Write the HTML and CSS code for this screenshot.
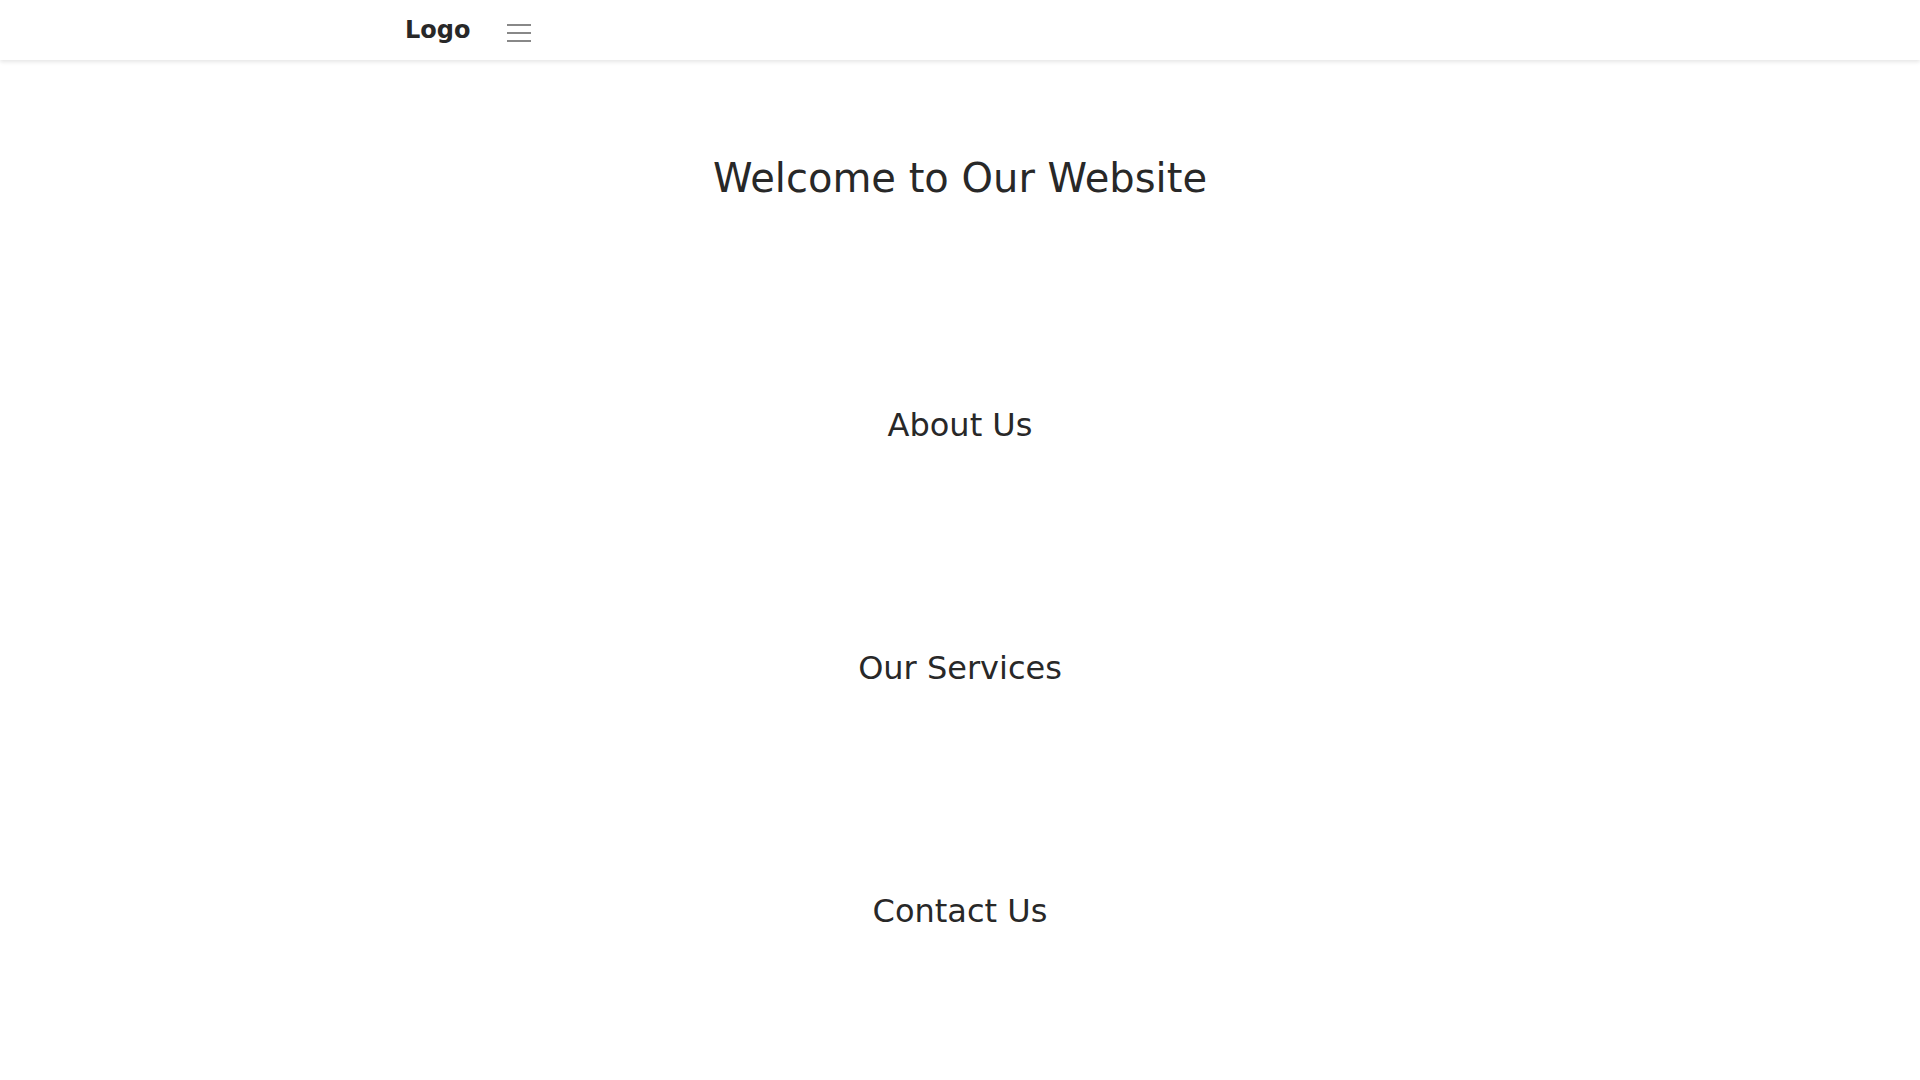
FILE: index.html
```html
<!DOCTYPE html>
<html lang="en">
<head>
    <meta charset="UTF-8">
    <meta name="viewport" content="width=device-width, initial-scale=1.0">
    <title>Welcome</title>
    <link rel="stylesheet" href="styles.css">
</head>
<body>
    <header class="header">
        <div class="header-inner">
            <div class="logo">Logo</div>
            <button class="menu-toggle" aria-label="Menu">
                <span></span>
                <span></span>
                <span></span>
            </button>
        </div>
    </header>

    <section class="hero">
        <h1>Welcome to Our Website</h1>
    </section>

    <section class="section" id="about">
        <h2>About Us</h2>
    </section>

    <section class="section" id="services">
        <h2>Our Services</h2>
    </section>

    <section class="section" id="contact">
        <h2>Contact Us</h2>
    </section>
</body>
</html>
```

FILE: styles.css
```css
body {
    margin: 0;
    font-family: "DejaVu Sans", Verdana, sans-serif;
    color: #282828;
    background-color: #fff;
}

.header {
    height: 60px;
    background-color: #fff;
    box-shadow: 0 2px 4px rgba(0, 0, 0, 0.1);
}

.header-inner {
    max-width: 1110px;
    margin: 0 auto;
    height: 100%;
    display: flex;
    align-items: center;
    gap: 37px;
}

.logo {
    font-size: 24px;
    font-weight: bold;
    color: #282828;
    margin-top: -1px;
}

.menu-toggle {
    display: flex;
    flex-direction: column;
    gap: 6px;
    width: 24px;
    padding: 0;
    margin-top: 6px;
    background: none;
    border: none;
    cursor: pointer;
}

.menu-toggle span {
    display: block;
    width: 24px;
    height: 2px;
    background-color: #888;
}

.hero {
    text-align: center;
    padding: 95px 20px 102px;
}

.hero h1 {
    margin: 0;
    font-size: 40px;
    font-weight: normal;
}

.section {
    text-align: center;
    padding: 103px 20px 102px;
}

.section h2 {
    margin: 0;
    font-size: 32px;
    font-weight: normal;
}
```
